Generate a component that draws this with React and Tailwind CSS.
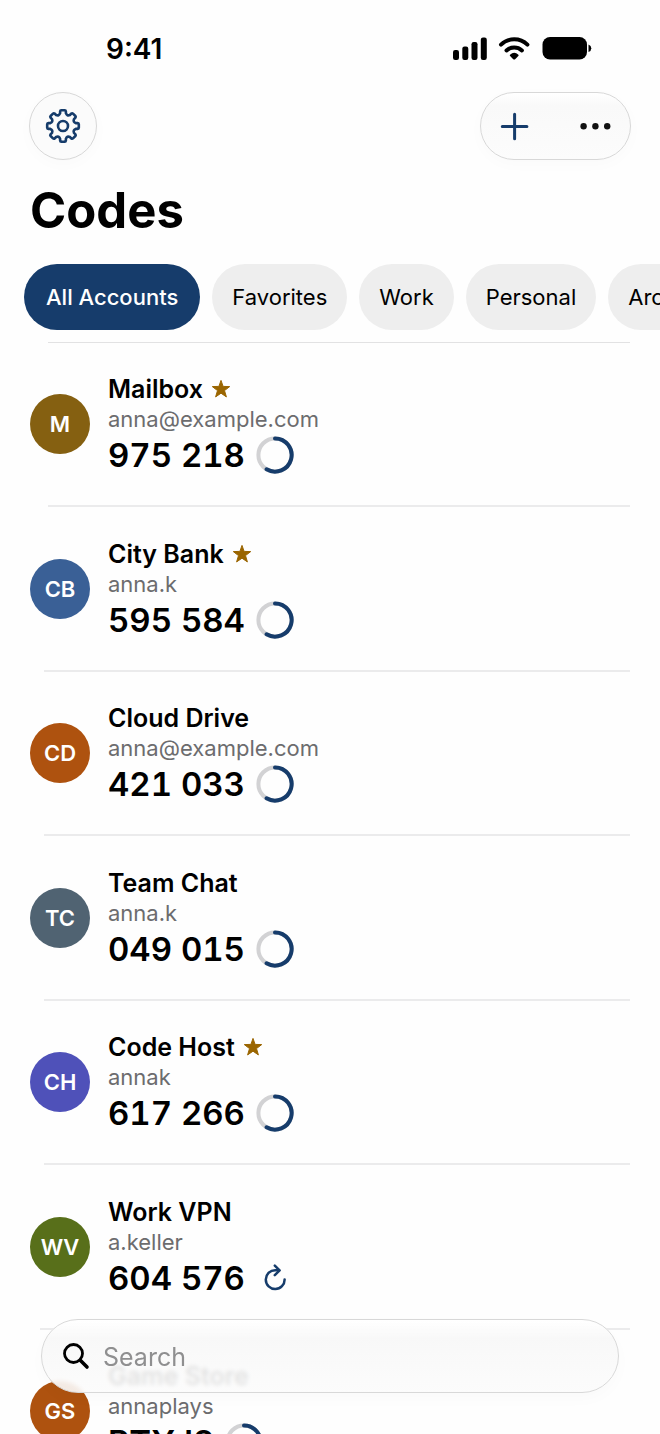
import { useState } from "react";

const ACCOUNTS = [
  { id: 1, name: "Mailbox", user: "anna@example.com", code: "975 218", initials: "M", color: "bg-[#856011]", star: true, line: "ml-12" },
  { id: 2, name: "City Bank", user: "anna.k", code: "595 584", initials: "CB", color: "bg-[#3a6096]", star: true, line: "ml-11" },
  { id: 3, name: "Cloud Drive", user: "anna@example.com", code: "421 033", initials: "CD", color: "bg-[#ae520f]", line: "ml-11" },
  { id: 4, name: "Team Chat", user: "anna.k", code: "049 015", initials: "TC", color: "bg-[#506372]", line: "ml-11" },
  { id: 5, name: "Code Host", user: "annak", code: "617 266", initials: "CH", color: "bg-[#4f51b9]", star: true, line: "ml-11" },
  { id: 6, name: "Work VPN", user: "a.keller", code: "604 576", initials: "WV", color: "bg-[#586f1a]", counter: true, line: "ml-10" },
  { id: 7, name: "Game Store", user: "annaplays", code: "PTYJ8", initials: "GS", color: "bg-[#ae520f]", line: "ml-10" },
];

const FILTERS = ["All Accounts", "Favorites", "Work", "Personal", "Archive"];

const polar = (r, deg) => {
  const a = (deg * Math.PI) / 180;
  return `${(18 + r * Math.sin(a)).toFixed(2)} ${(18 - r * Math.cos(a)).toFixed(2)}`;
};

const gearPath =
  [0, 45, 90, 135, 180, 225, 270, 315]
    .map((a, i) =>
      `${i ? "L" : "M"}${polar(13, a - 13)} L${polar(15, a - 11)} Q${polar(16, a - 10)} ${polar(15.9, a - 6)} L${polar(15.9, a + 6)} Q${polar(16, a + 10)} ${polar(15, a + 11)} L${polar(13, a + 13)} Q${polar(10.6, a + 22.5)} ${polar(13, a + 32)}`
    )
    .join(" ") + "Z";

function GearIcon() {
  return (
    <svg className="size-9" viewBox="0 0 36 36" fill="none" stroke="#163c6b" strokeWidth="2.6" strokeLinejoin="round" aria-hidden="true">
      <path d={gearPath} />
      <circle cx="18" cy="18" r="5" />
    </svg>
  );
}

function StatusBar() {
  return (
    <div className="flex h-[92px] items-center justify-between pt-1 pr-[68px] pl-[106px]">
      <span className="pt-0.5 text-[28px] leading-8 font-semibold">9:41</span>
      <svg className="h-6 w-[140px]" viewBox="0 0 140 24" aria-hidden="true">
        <rect x="1" y="14" width="6" height="10" rx="2.2" />
        <rect x="10.3" y="10.5" width="6" height="13.5" rx="2.2" />
        <rect x="19.5" y="6" width="6" height="18" rx="2.2" />
        <rect x="28.8" y="1.5" width="6" height="22.5" rx="2.2" />
        <g fill="none" stroke="#000" strokeWidth="4" strokeLinecap="round">
          <path d="M49 8.6 A19 19 0 0 1 75.4 8.6" />
          <path d="M54.5 14.4 A11.5 11.5 0 0 1 69.9 14.4" />
        </g>
        <path d="M58 18.8 Q62.2 14.8 66.4 18.8 Q66.9 19.5 66.3 20.1 L63.4 22.9 Q62.2 23.9 61 22.9 L58.1 20.1 Q57.5 19.5 58 18.8Z" />
        <rect x="90.5" y="1" width="44.5" height="22.5" rx="7.5" />
        <path d="M136.5 8.5 Q139.3 9.5 139.3 12.2 Q139.3 15 136.5 16Z" />
      </svg>
    </div>
  );
}

function Star() {
  return (
    <svg className="size-5" viewBox="0 0 20 20" role="img" aria-label="Favorite">
      <path
        fill="#9a6500"
        stroke="#9a6500"
        strokeWidth="1"
        strokeLinejoin="round"
        d="M10 1.4 L12.1 7.4 L18.7 7.6 L13.5 11.6 L15.4 17.9 L10 14.2 L4.6 17.9 L6.5 11.6 L1.3 7.6 L7.9 7.4Z"
      />
    </svg>
  );
}

function TimerRing() {
  return (
    <svg className="size-[38px]" viewBox="0 0 38 38" fill="none" strokeWidth="4" aria-hidden="true">
      <circle cx="19" cy="19" r="16.6" stroke="#d2d2d4" />
      <path d="M19 2.4 A16.6 16.6 0 1 1 10.6 33.3" stroke="#163c6b" strokeLinecap="round" />
    </svg>
  );
}

function RefreshIcon() {
  return (
    <svg className="size-[38px]" viewBox="0 0 38 38" fill="none" stroke="#163c6b" strokeWidth="2.5" strokeLinecap="round" strokeLinejoin="round" aria-hidden="true">
      <path d="M28.6 20.4 A9.4 9.4 0 1 1 19.2 11.2 L23 11.2" />
      <path d="M18.8 6.6 L23.6 11.4 L18.8 16.2" />
    </svg>
  );
}

function AccountRow({ account }) {
  return (
    <li className="even:pt-px">
      <div className="flex h-[162px] items-center gap-[18px] pl-[30px]">
        <div className={`flex size-[60px] shrink-0 items-center justify-center rounded-full text-[22px] font-semibold text-white ${account.color}`}>
          {account.initials}
        </div>
        <div>
          <div className="flex items-center gap-2">
            <span className="text-[25px] leading-8 font-semibold">{account.name}</span>
            {account.star && <Star />}
          </div>
          <p className="text-[22px] leading-7 text-[#6c6c6e]">{account.user}</p>
          <div className="mt-0.5 flex items-center gap-[11px]">
            <span className="text-[33px] leading-10 font-semibold tabular-nums">{account.code}</span>
            {account.counter ? (
              <button type="button" aria-label="Next code">
                <RefreshIcon />
              </button>
            ) : (
              <TimerRing />
            )}
          </div>
        </div>
      </div>
      <div className={`mr-[30px] h-0.5 bg-[#ebebec] ${account.line}`} />
    </li>
  );
}

export default function App() {
  const [filter, setFilter] = useState("All Accounts");
  const [query, setQuery] = useState("");

  return (
    <div className="flex h-screen flex-col overflow-hidden bg-[#fefefe] font-['Inter',sans-serif] text-black">
      <StatusBar />

      <header className="px-[29px]">
        <div className="flex items-center justify-between">
          <button
            type="button"
            aria-label="Settings"
            className="flex size-[68px] items-center justify-center rounded-full border border-[#d8d8d8] bg-[#fbfbfb] shadow-[0_4px_16px_rgba(0,0,0,0.02)]"
          >
            <GearIcon />
          </button>
          <div className="flex h-[68px] w-[151px] items-center justify-between rounded-full border border-[#d8d8d8] bg-linear-to-b from-white via-[#f9f9f9] via-20% to-[#fcfcfc] px-[18px] shadow-[0_4px_16px_rgba(0,0,0,0.02)]">
            <button type="button" aria-label="Add account">
              <svg className="size-8" viewBox="0 0 32 32" fill="none" stroke="#163c6b" strokeWidth="3" strokeLinecap="round">
                <path d="M15.6 4.2 V28.8 M3.3 16.5 H27.9" />
              </svg>
            </button>
            <button type="button" aria-label="More">
              <svg className="size-8" viewBox="0 0 32 32" fill="#111">
                <circle cx="3.6" cy="16.2" r="3.2" />
                <circle cx="15.4" cy="16.2" r="3.2" />
                <circle cx="27.2" cy="16.2" r="3.2" />
              </svg>
            </button>
          </div>
        </div>
        <h1 className="mt-[21px] pl-px text-[49px] leading-[60px] font-bold">Codes</h1>
      </header>

      <nav className="mt-[23px] flex shrink-0 gap-3 overflow-hidden pl-6" aria-label="Filters">
        {FILTERS.map((f) => (
          <button
            key={f}
            type="button"
            onClick={() => setFilter(f)}
            className={`h-[66px] shrink-0 rounded-full text-[22px] ${
              f === filter ? "bg-[#163c6b] px-[22px] font-medium text-white" : "bg-[#eeeeee] px-5"
            }`}
          >
            {f}
          </button>
        ))}
      </nav>

      <main className="mt-3 min-h-0 flex-1 overflow-hidden">
        <div className="mr-[30px] ml-12 h-px bg-[#e2e2e3]" />
        <ul>
          {ACCOUNTS.map((a) => (
            <AccountRow key={a.id} account={a} />
          ))}
        </ul>
      </main>

      <label className="fixed inset-x-[41px] bottom-[41px] flex h-[74px] items-center gap-[13px] rounded-full border border-[#d8d8d8] bg-linear-to-b from-white/95 via-[#f8f8f8]/90 via-25% to-[#fcfcfc]/90 pl-5 shadow-[0_6px_16px_rgba(0,0,0,0.02)] backdrop-blur-[2px]">
        <svg className="size-7" viewBox="0 0 28 28" fill="none" stroke="#000" strokeLinecap="round" aria-hidden="true">
          <circle cx="11.5" cy="11.5" r="9" strokeWidth="2.8" />
          <path d="M18.5 18.5 L25 25" strokeWidth="3.6" />
        </svg>
        <input
          type="search"
          aria-label="Search"
          placeholder="Search"
          value={query}
          onChange={(e) => setQuery(e.target.value)}
          className="min-w-0 flex-1 bg-transparent pt-0.5 text-[25px] leading-8 outline-none placeholder:text-[#8f8f90]"
        />
      </label>
    </div>
  );
}
